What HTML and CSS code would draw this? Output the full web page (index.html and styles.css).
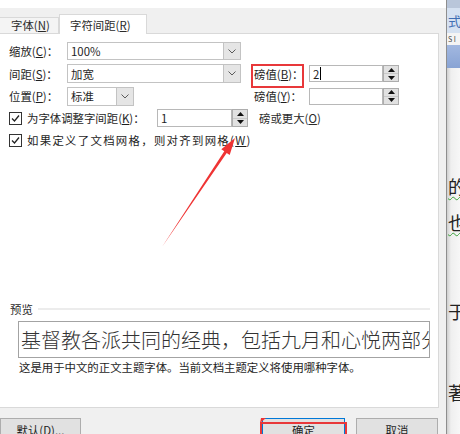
FILE: index.html
```html
<!DOCTYPE html>
<html lang="zh-CN">
<head>
<meta charset="utf-8">
<title>字体</title>
<link rel="stylesheet" href="styles.css">
</head>
<body>
<div class="screen">
  <div class="dialog">
    <div class="titlebar"></div>
    <div class="tabs">
      <div class="tab">字体(<u>N</u>)</div>
      <div class="tab active">字符间距(<u>R</u>)</div>
    </div>
    <div class="panel">
      <div class="grid">
        <span class="lbl c1">缩放(<u>C</u>)：</span>
        <div class="select h18 c2"><span class="val">100%</span><span class="dd"><svg width="8" height="5" viewBox="0 0 8 5"><path d="M0.5 0.5 L4 4 L7.5 0.5" fill="none" stroke="#5a5a5a" stroke-width="1"/></svg></span></div>

        <span class="lbl c1">间距(<u>S</u>)：</span>
        <div class="select h19 c2"><span class="val">加宽</span><span class="dd"><svg width="8" height="5" viewBox="0 0 8 5"><path d="M0.5 0.5 L4 4 L7.5 0.5" fill="none" stroke="#5a5a5a" stroke-width="1"/></svg></span></div>
        <span class="lbl c4 marked">磅值(<u>B</u>)：</span>
        <div class="spin c5 h17"><span class="val">2<i class="caret"></i></span><span class="arrows"><span class="half"><svg width="7" height="4" viewBox="0 0 7 4"><polygon points="0,4 3.5,0 7,4" fill="#111"/></svg></span><span class="half"><svg width="7" height="4" viewBox="0 0 7 4"><polygon points="0,0 3.5,4 7,0" fill="#111"/></svg></span></span></div>

        <span class="lbl c1">位置(<u>P</u>)：</span>
        <div class="select h19 c2 narrow"><span class="val">标准</span><span class="dd"><svg width="8" height="5" viewBox="0 0 8 5"><path d="M0.5 0.5 L4 4 L7.5 0.5" fill="none" stroke="#5a5a5a" stroke-width="1"/></svg></span></div>
        <span class="lbl c4">磅值(<u>Y</u>)：</span>
        <div class="spin c5 h17"><span class="val"></span><span class="arrows"><span class="half"><svg width="7" height="4" viewBox="0 0 7 4"><polygon points="0,4 3.5,0 7,4" fill="#111"/></svg></span><span class="half"><svg width="7" height="4" viewBox="0 0 7 4"><polygon points="0,0 3.5,4 7,0" fill="#111"/></svg></span></span></div>
      </div>

      <div class="crow">
        <span class="check"><svg width="11" height="11" viewBox="0 0 11 11"><path d="M2 5.5 L4.5 8 L9 2.5" fill="none" stroke="#222" stroke-width="1.3"/></svg></span>
        <span class="ctext kern">为字体调整字间距(<u>K</u>)：</span>
        <div class="spin w91 h18"><span class="val">1</span><span class="arrows"><span class="half"><svg width="7" height="4" viewBox="0 0 7 4"><polygon points="0,4 3.5,0 7,4" fill="#111"/></svg></span><span class="half"><svg width="7" height="4" viewBox="0 0 7 4"><polygon points="0,0 3.5,4 7,0" fill="#111"/></svg></span></span></div>
        <span class="after">磅或更大(<u>O</u>)</span>
      </div>
      <div class="crow">
        <span class="check"><svg width="11" height="11" viewBox="0 0 11 11"><path d="M2 5.5 L4.5 8 L9 2.5" fill="none" stroke="#222" stroke-width="1.3"/></svg></span>
        <span class="ctext wide">如果定义了文档网格，则对齐到网格(<u>W</u>)</span>
      </div>

      <div class="preview-head"><span>预览</span><span class="rule"></span></div>
      <div class="preview-box">基督教各派共同的经典，包括九月和心悦两部分</div>
      <div class="caption">这是用于中文的正文主题字体。当前文档主题定义将使用哪种字体。</div>
    </div>
    <div class="footer">
      <div class="btn b-default">默认(<u>D</u>)...</div>
      <div class="btn b-ok">确定</div>
      <div class="btn b-cancel">取消</div>
    </div>
  </div>
  <div class="app">
    <div class="app-top"></div>
    <div class="app-tab">式</div>
    <div class="app-strip">S I</div>
    <div class="app-bar"></div>
    <div class="app-body">
      <div class="ch wavy c-de">的</div>
      <div class="ch wavy c-ye">也</div>
      <div class="ch c-yu">于</div>
      <div class="ch c-zhu">著</div>
    </div>
  </div>
  <svg class="marks" width="460" height="434" viewBox="0 0 460 434">
    <polygon points="162,247 224.3,151.3 221.3,149.3 235,138 229.7,154.9 226.7,152.9" fill="#ef3434"/>
    <polygon points="260,423 261,418 266,418" fill="#ef3434"/>
  </svg>
</div>
</body>
</html>
```

FILE: styles.css
```css
* { box-sizing: border-box; }
html, body { margin: 0; padding: 0; }
body {
  width: 460px;
  height: 434px;
  overflow: hidden;
  background: #fff;
  font-family: "Noto Sans CJK SC", "Noto Sans", sans-serif;
  font-size: 11.4px;
  line-height: 14px;
  color: #1e1e1e;
}
u { text-decoration: underline; text-underline-offset: 1px; }

.screen {
  position: relative;
  display: flex;
  width: 460px;
  height: 434px;
  overflow: hidden;
}

/* dialog */
.dialog {
  flex: none;
  width: 446px;
  height: 434px;
  background: #f0f0f0;
  display: flex;
  flex-direction: column;
}
.titlebar { height: 8px; background: #fff; flex: none; }
.tabs {
  height: 25px;
  flex: none;
  display: flex;
  align-items: flex-end;
  position: relative;
  z-index: 2;
}
.tab {
  height: 16px;
  width: 60px;
  margin-left: -1px;
  padding-left: 11px;
  border: 1px solid #d9d9d9;
  border-bottom: none;
  background: #f4f4f4;
  line-height: 15px;
  color: #2a2a2a;
}
.tab.active {
  height: 20px;
  width: 88px;
  margin-left: 0;
  margin-bottom: -1px;
  padding-left: 10px;
  padding-top: 3px;
  background: #fff;
}

.panel {
  flex: none;
  position: relative;
  width: 440px;
  height: 375px;
  margin-left: -1px;
  padding: 6px 8px 0 9px;
  background: #fff;
  border: 1px solid #d9d9d9;
}

.grid {
  display: grid;
  grid-template-columns: 58px 174px 13px 55px 90px;
  grid-template-rows: 22px 23px 22px;
  align-items: center;
}
.c1 { grid-column: 1; }
.c2 { grid-column: 2; }
.c4 { grid-column: 4; }
.c5 { grid-column: 5; }
.lbl { white-space: nowrap; justify-self: start; }
.marked { position: relative; }
.marked::after {
  content: "";
  position: absolute;
  left: -3px;
  right: -1px;
  top: -3px;
  bottom: -7px;
  border: 2px solid #e8383a;
}

.select {
  display: flex;
  border: 1px solid #c3c3c3;
  background: #fff;
}
.select.narrow { width: 67px; justify-self: start; }
.h17 { height: 17px; }
.h18 { height: 18px; }
.h19 { height: 19px; }
.val {
  flex: 1;
  padding-left: 3px;
  display: flex;
  align-items: center;
  white-space: nowrap;
}
.dd {
  width: 17px;
  flex: none;
  background: #e5e5e5;
  border-left: 1px solid #c3c3c3;
  display: flex;
  align-items: center;
  justify-content: center;
}

.spin {
  display: flex;
  width: 90px;
}
.spin .val {
  border: 1px solid #b8b8b8;
  background: #fff;
}
.spin.w91 { width: 91px; }
.arrows {
  width: 16px;
  flex: none;
  display: flex;
  flex-direction: column;
  border: 1px solid #adadad;
  background: #e1e1e1;
}
.half {
  flex: 1;
  display: flex;
  align-items: center;
  justify-content: center;
}
.half + .half { border-top: 1px solid #c9c9c9; }
.caret {
  display: inline-block;
  width: 1px;
  height: 13px;
  margin-left: 1px;
  background: #000;
}

.crow {
  display: flex;
  align-items: center;
  height: 22px;
}
.check {
  width: 13px;
  height: 13px;
  flex: none;
  border: 1px solid #333;
  background: #fff;
  display: flex;
  align-items: center;
  justify-content: center;
}
.ctext { margin-left: 5px; white-space: nowrap; }
.ctext.kern { width: 130px; }
.ctext.wide { letter-spacing: 1.3px; }
.after { margin-left: 11px; white-space: nowrap; color: #2a2a2a; }

.preview-head {
  display: flex;
  align-items: center;
  height: 14px;
  margin: 151px 0 0 1px;
  color: #2a2a2a;
}
.rule {
  flex: 1;
  height: 2px;
  margin-left: 5px;
  background: #ececec;
}
.preview-box {
  height: 37px;
  margin: 5px 0 0 9px;
  padding-left: 2px;
  border: 1px solid #a3a3a3;
  background: #fff;
  font-size: 20px;
  line-height: 35px;
  font-weight: 300;
  color: #333;
  white-space: nowrap;
  overflow: hidden;
}
.caption {
  margin: 2px 0 0 10px;
  line-height: 14px;
  white-space: nowrap;
}

.footer {
  flex: 1;
  display: flex;
  align-items: flex-start;
  padding-top: 10px;
}
.btn {
  height: 23px;
  flex: none;
  border: 1px solid #adadad;
  background: #e1e1e1;
  display: flex;
  align-items: center;
  justify-content: center;
  color: #1e1e1e;
}
.b-default { width: 81px; }
.b-ok {
  width: 83px;
  margin-left: 181px;
  border-color: #0078d7;
  position: relative;
}
.b-ok::after {
  content: "";
  position: absolute;
  left: -3px;
  right: -3px;
  top: 3px;
  bottom: -6px;
  border: 2px solid #e8383a;
}
.b-cancel { width: 82px; margin-left: 11px; }

/* background application, cut at right edge */
.app {
  flex: none;
  width: 14px;
  height: 434px;
  overflow: hidden;
  display: flex;
  flex-direction: column;
  border-left: 1px solid #8e8e8e;
  background: linear-gradient(to right, #cfcfcf, #efefef 4px, #f7f7f7);
}
.app-top { height: 8px; background: #b9c6da; flex: none; }
.app-tab {
  height: 25px;
  flex: none;
  background: #d5e1f1;
  color: #3f6db3;
  font-size: 13px;
  line-height: 25px;
  padding-left: 1px;
  white-space: nowrap;
}
.app-strip {
  height: 12px;
  flex: none;
  background: #f4f4f4;
  font-size: 7px;
  line-height: 12px;
  padding-left: 1px;
  color: #444;
  white-space: nowrap;
}
.app-bar {
  height: 23px;
  flex: none;
  background: linear-gradient(#a2b8e0, #88a3d4);
}
.app-body { flex: 1; padding-left: 1px; }
.ch {
  font-size: 18px;
  line-height: 20px;
  height: 20px;
  color: #222;
  white-space: nowrap;
}
.wavy {
  text-decoration: underline wavy #3aa13a;
  text-decoration-thickness: 1px;
  text-underline-offset: 2px;
}
.c-de { margin-top: 108px; }
.c-ye { margin-top: 16px; }
.c-yu { margin-top: 69px; }
.c-zhu { margin-top: 61px; }

.marks {
  position: absolute;
  left: 0;
  top: 0;
  z-index: 5;
  pointer-events: none;
}
```
